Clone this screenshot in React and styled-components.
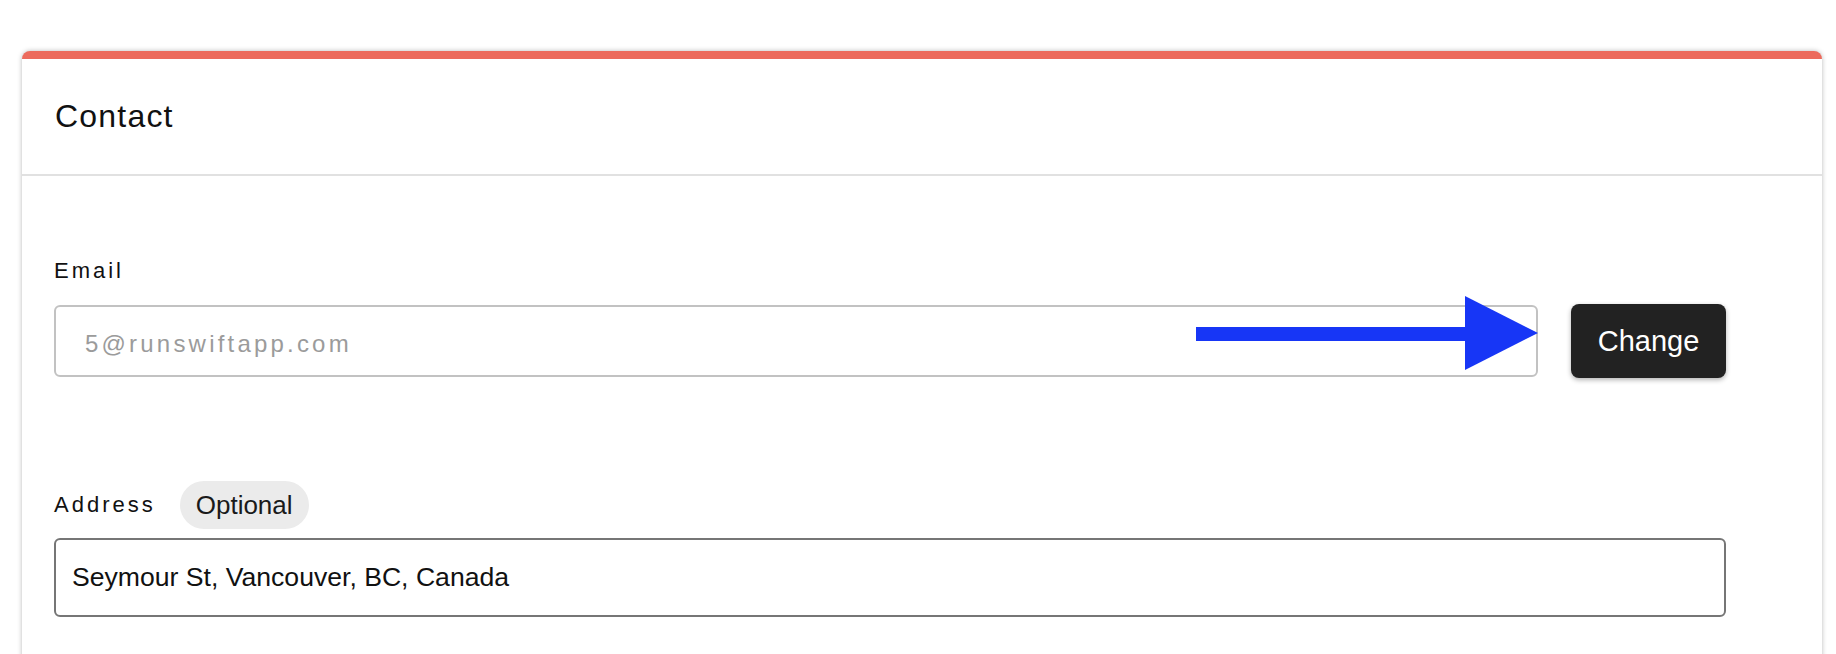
import React from "react";
import styled, { createGlobalStyle } from "styled-components";

const GlobalStyle = createGlobalStyle`
  html, body {
    margin: 0;
    padding: 0;
    background: #ffffff;
    font-family: "Liberation Sans", Arial, sans-serif;
    overflow: hidden;
  }
`;

const Page = styled.div`
  padding: 51px 14px 0 22px;
`;

const Card = styled.section`
  width: 1800px;
  min-height: 700px;
  background: #fff;
  border-top: 8px solid #ec6a5c;
  border-radius: 8px 8px 0 0;
  box-shadow: 0 0 5px rgba(0, 0, 0, 0.28);
`;

const Header = styled.header`
  height: 115px;
  display: flex;
  align-items: center;
  padding-left: 33px;
  border-bottom: 2px solid #e1e1e1;
`;

const Title = styled.h2`
  margin: 0;
  font-size: 32px;
  font-weight: 400;
  letter-spacing: 1.2px;
  color: #111;
`;

const Body = styled.div`
  padding: 82px 96px 0 32px;
  display: flex;
  flex-direction: column;
`;

const Field = styled.div`
  display: flex;
  flex-direction: column;
  gap: ${(p) => p.$gap}px;
  margin-bottom: ${(p) => p.$after || 0}px;
`;

const LabelRow = styled.div`
  display: flex;
  align-items: center;
  height: ${(p) => p.$h}px;
  gap: 24px;
`;

const Label = styled.label`
  font-size: 22px;
  line-height: 26px;
  letter-spacing: 3px;
  color: #111;
`;

const Pill = styled.span`
  height: 48px;
  line-height: 48px;
  padding: 0 16px;
  border-radius: 24px;
  background: #ebebeb;
  font-size: 26px;
  color: #1a1a1a;
`;

const InputRow = styled.div`
  position: relative;
  display: flex;
  align-items: center;
  gap: 33px;
`;

const TextBox = styled.input`
  box-sizing: border-box;
  flex: 1;
  width: 100%;
  height: ${(p) => p.$h}px;
  margin: 0;
  padding: ${(p) => (p.$muted ? "6px 0 0 29px" : "0 0 0 16px")};
  border: 2px solid ${(p) => (p.$muted ? "#c2c2c2" : "#767676")};
  border-radius: 6px;
  background: #fff;
  font-family: "Liberation Sans", Arial, sans-serif;
  font-size: ${(p) => (p.$muted ? 24 : 26.6)}px;
  letter-spacing: ${(p) => (p.$muted ? 3.2 : 0)}px;
  color: ${(p) => (p.$muted ? "#9b9b9b" : "#111")};
  outline: none;
`;

const Button = styled.button`
  flex: none;
  width: 155px;
  height: 74px;
  border: none;
  border-radius: 8px;
  background: #222222;
  color: #fff;
  font-family: "Liberation Sans", Arial, sans-serif;
  font-size: 29px;
  box-shadow: 0 2px 5px rgba(0, 0, 0, 0.3);
  cursor: pointer;
`;

const Arrow = styled.svg`
  position: absolute;
  left: 1142px;
  top: -8px;
  pointer-events: none;
`;

export default function App() {
  return (
    <>
      <GlobalStyle />
      <Page>
        <Card>
          <Header>
            <Title>Contact</Title>
          </Header>
          <Body>
            <Field $gap={20} $after={103}>
              <LabelRow $h={26}>
                <Label>Email</Label>
              </LabelRow>
              <InputRow>
                <TextBox $h={72} $muted readOnly value="5@runswiftapp.com" />
                <Button>Change</Button>
                <Arrow width="342" height="74" viewBox="0 0 342 74">
                  <rect x="0" y="31" width="272" height="14" fill="#1736f6" />
                  <polygon points="269,0 342,37 269,74" fill="#1736f6" />
                </Arrow>
              </InputRow>
            </Field>
            <Field $gap={9}>
              <LabelRow $h={48}>
                <Label>Address</Label>
                <Pill>Optional</Pill>
              </LabelRow>
              <InputRow>
                <TextBox $h={79} readOnly value="Seymour St, Vancouver, BC, Canada" />
              </InputRow>
            </Field>
          </Body>
        </Card>
      </Page>
    </>
  );
}
